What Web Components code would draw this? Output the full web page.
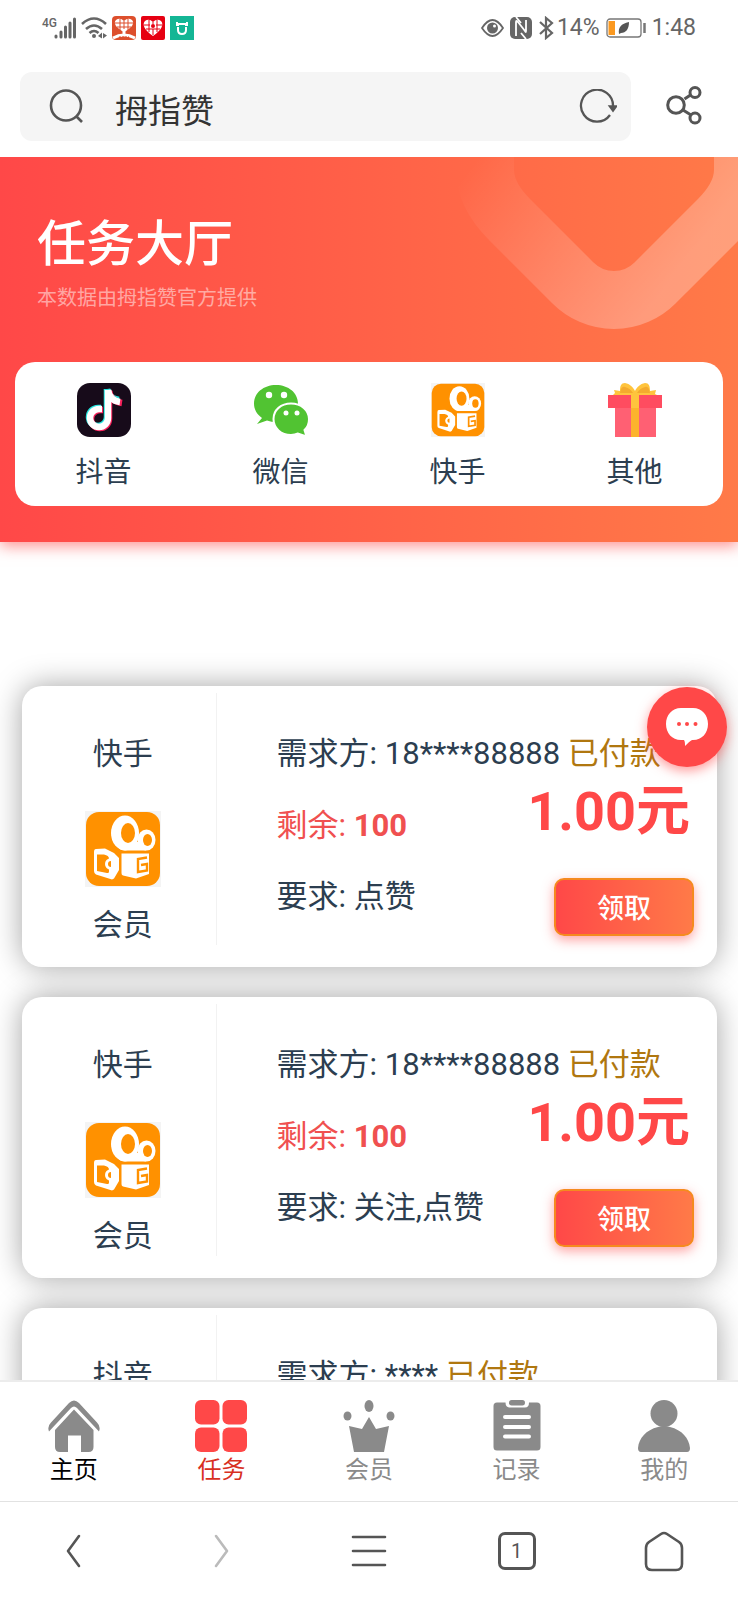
<!DOCTYPE html>
<html lang="zh-CN">
<head>
<meta charset="utf-8">
<meta name="viewport" content="width=device-width, initial-scale=1">
<title>拇指赞</title>
<style>
  body { margin: 0; background: #fff; color: #2c3e50; font-family: Roboto, "Noto Sans CJK SC", sans-serif; }
</style>
</head>
<body>
<app-shell>
  <status-bar slot="top"></status-bar>
  <address-bar slot="top"></address-bar>

  <task-hero>
    <span slot="title">任务大厅</span>
    <span slot="subtitle">本数据由拇指赞官方提供</span>
    <channel-link icon="douyin">抖音</channel-link>
    <channel-link icon="wechat">微信</channel-link>
    <channel-link icon="kuaishou">快手</channel-link>
    <channel-link icon="gift">其他</channel-link>
  </task-hero>
  <task-list>
    <task-card name="快手" icon="kuaishou" owner="18****88888" left="100" need="点赞" price="1.00元"></task-card>
    <task-card name="快手" icon="kuaishou" owner="18****88888" left="100" need="关注,点赞" price="1.00元"></task-card>
    <task-card name="抖音" owner="****"></task-card>
  </task-list>

  <chat-button slot="float"></chat-button>
  <tab-bar slot="bottom">
    <tab-item icon="home" tone="plain">主页</tab-item>
    <tab-item icon="tasks" tone="active">任务</tab-item>
    <tab-item icon="crown">会员</tab-item>
    <tab-item icon="records">记录</tab-item>
    <tab-item icon="person">我的</tab-item>
  </tab-bar>
  <browser-bar slot="bottom"></browser-bar>
</app-shell>

<script>
const ICONS = {
  douyin: `<svg viewBox="0 0 54 54" aria-hidden="true"><rect width="54" height="54" rx="13" fill="#170b1a"/>
    <g fill="none" stroke-width="6.500"><g stroke="#25e5df"><path d="M30 6v28a9 9 0 1 1-9-9h3"/><path d="M30 6c1 7 5 10 12 11"/></g>
    <g stroke="#f7205a"><path d="M32 8v28a9 9 0 1 1-9-9h3"/><path d="M32 8c1 7 6 11 13 12"/></g>
    <g stroke="#fff"><path d="M31 7v28a9 9 0 1 1-9-9h3"/><path d="M31 7c1 7 5 11 12 12"/></g></g></svg>`,
  wechat: `<svg viewBox="0 0 54 54" aria-hidden="true"><g fill="#51c332">
    <path d="M22 2C9.500 2 0 10 0 20.500c0 6 3 11 8 14.500L3 41l10-3.500c3 1 6 1.500 9 1.500 13 0 22-8 22-18.500S34.500 2 22 2z"/>
    <path stroke="#fff" stroke-width="2" d="M37 20.500c-10 0-17.500 6.500-17.500 15.500S27 52 37 52c2.500 0 5-.5 7-1.500l8.500 3-2-6.500c3-2.500 4.500-6.500 4.500-11 0-9-8-15.500-18-15.500z"/></g>
    <g fill="#fff"><circle cx="15" cy="12" r="3.200"/><circle cx="30" cy="12" r="3.200"/><circle cx="32" cy="30" r="2.500"/><circle cx="43" cy="30" r="2.500"/></g></svg>`,
  kuaishou: `<svg viewBox="0 0 76 76" aria-hidden="true"><rect width="76" height="76" fill="#f4f4f4"/><rect x="1" y="1" width="74" height="74" rx="13" fill="#ff9100"/>
    <g fill="#fff"><ellipse cx="40" cy="22" rx="14" ry="17.500"/><ellipse cx="61.500" cy="29" rx="9" ry="10.500"/><path d="M33 36l16-5h12v8.500H40q-5 0-7-3.500z"/>
    <path d="M11 38l9-.5 9 4.500 5 5v12l-5 8.500-2 1-16-5q-2-1-2-3.500V41q0-3 2-3z"/><path d="M36.500 42.500H64V63l-13 4.500-13-3q-1.500-.5-1.500-2.500z"/></g>
    <g fill="#ff9100"><ellipse cx="43" cy="22" rx="7" ry="10"/><ellipse cx="62.500" cy="29" rx="4.500" ry="6"/><path d="M12 43.500h7q5 1 5 4v13q0 2-2 1.500l-10-2z"/></g>
    <path d="M26 47q-6 1-6 6t6 6z" fill="#fff"/><path d="M26 50q-3 0-3 3t3 3z" fill="#ff9100"/>
    <path d="M62 46.500l-9 1.500v13l9-1.500V53l-6 1" fill="none" stroke="#ff9100" stroke-width="2.400"/></svg>`,
  gift: `<svg viewBox="0 0 54 54" aria-hidden="true"><path fill="#ff6073" d="M7 25h41v29H7z"/><path fill="#ff4c60" d="M0 12h54v13H0z"/>
    <path fill="#fcb42d" d="M23 9h8v45h-8z"/><path fill="#ffc43d" d="M23 9h8v16h-8zM6 7l6 1C12 3 13 0 17 0c5 1 8 4 10 8 2-4 5-7 10-8 4 0 5 3 5 8l6-1-1 4 2 1H5l2-2z"/>
    <path fill="#f4aa2e" d="M12 10c1-5 2-7 5-6 4 1 6 3 8 6zM42 10c-1-5-2-7-5-6-4 1-6 3-8 6z"/></svg>`,
  home: `<svg viewBox="0 0 52 52" aria-hidden="true"><path fill="#8a8a8a" d="M1 31.500q-2-5 2-9L21 3q5-5 10 0l18 19.500q4 4 2 9L29 8q-3-3-6 0z"/>
    <path fill="#8a8a8a" d="M26 9.500L45.500 30v17q0 5-5 5H33V35.500H20V52h-8q-5 0-5-5V30z"/></svg>`,
  tasks: `<svg viewBox="0 0 52 52" aria-hidden="true"><g fill="#ff4848"><rect width="24.500" height="24.500" rx="6"/><rect x="27.500" width="24.500" height="24.500" rx="6"/><rect y="27.500" width="24.500" height="24.500" rx="6"/><rect x="27.500" y="27.500" width="24.500" height="24.500" rx="6"/></g></svg>`,
  crown: `<svg viewBox="0 0 52 52" aria-hidden="true"><g fill="#8a8a8a"><ellipse cx="4.500" cy="16" rx="4" ry="4.500"/><ellipse cx="26" cy="6" rx="4.500" ry="6"/><ellipse cx="47.500" cy="16" rx="4" ry="4.500"/>
    <path d="M6 26l13 3 7-12 7 12 13-3-5 26H11z"/></g></svg>`,
  records: `<svg viewBox="0 0 52 52" aria-hidden="true"><path fill="#8a8a8a" d="M6 2.500h8.500q0 5 4.500 5h15q4 0 4-5h8q3.500 0 3.500 3.500v41q0 3.500-3.500 3.500H6q-3.500 0-3.500-3.500V6q0-3.500 3.500-3.500z"/>
    <rect x="18" width="16" height="5.500" rx="2.700" fill="#8a8a8a"/><path d="M14 17h24M14 27h24M14 36.500h24" stroke="#fff" stroke-width="4" stroke-linecap="round"/></svg>`,
  person: `<svg viewBox="0 0 52 52" aria-hidden="true"><g fill="#8a8a8a"><circle cx="26" cy="13.500" r="13.500"/><path d="M20 27q6-2 12 0c12 3 19 11 20 21q0 4-3 4H3q-3 0-3-4c1-10 8-18 20-21z"/></g></svg>`
};

/* Gives each component an open shadow root filled with its own styles and markup. */
class Part extends HTMLElement {
  connectedCallback() {
    if (this.shadowRoot) return;
    const t = document.createElement('template');
    t.innerHTML = `<style>*{box-sizing:border-box}svg{display:block}button,a,input{font:inherit;color:inherit}button{border:0;padding:0;background:none}a{text-decoration:none}${this.css()}</style>${this.html()}`;
    this.attachShadow({ mode: 'open' }).append(t.content.cloneNode(true));
  }
}

customElements.define('app-shell', class extends Part {
  css() { return `
    :host{display:flex;flex-direction:column;height:100vh}
    header,footer{flex:none;background:#fff}
    .view{flex:1;min-height:0;position:relative;display:flex}
    main{flex:1;min-width:0;overflow:hidden auto;scrollbar-width:none}`; }
  html() { return `<header><slot name="top"></slot></header><div class="view"><main><slot></slot></main><slot name="float"></slot></div><footer><slot name="bottom"></slot></footer>`; }
});

customElements.define('status-bar', class extends Part {
  css() { return `
    :host{display:flex;justify-content:space-between;align-items:center;height:56px;padding:0 42px;color:#666;font-size:23px;line-height:24px}
    div{display:flex;align-items:center;gap:5px}
    .net{display:flex;align-items:flex-start}
    .net span{width:12px;font-size:12px;line-height:12px;font-weight:500}
    .right{gap:6px}
    .tight{display:flex;gap:3px}`; }
  html() { return `
    <div>
      <span class="net"><span>4G</span><svg width="22" height="22" viewBox="0 0 22 22" fill="none" stroke="#666" stroke-width="3" stroke-linecap="round"><path d="M2 20v-1M7 20v-5M11.500 20V10M16 20V6M20.500 20V2"/></svg></span>
      <svg width="26" height="22" viewBox="0 0 26 22" fill="none" stroke="#666" stroke-width="2.600"><path d="M1 7q12-11 24 0M5 12q8-7 16 0M8.500 16q4.500-4 9 0"/><g fill="#666" stroke="none"><circle cx="13" cy="19" r="2"/><path d="M21 15.500v6l-4-2.500zM22 16l4 2.500-4 3z"/></g></svg>
      <svg width="24" height="24" viewBox="0 0 24 24"><rect width="24" height="24" rx="4" fill="#dd4f2c"/><path d="M12 16C4 12 1 7 4 4q4-3 8 1 4-4 8-1c3 3 0 8-8 12z" fill="#fff"/><path d="M3 7h18M5 11h14M8 3v12M16 3v12M12 5v9" stroke="#dd4f2c"/><path d="M12 13v6M1 22q11-6 22 0" stroke="#fff" stroke-width="3" fill="none"/><path d="M7 21.500h10" stroke="#dd4f2c" stroke-width="2" stroke-dasharray="2 1"/></svg>
      <svg width="24" height="24" viewBox="0 0 24 24"><rect width="24" height="24" rx="2" fill="#e60012"/><path d="M12 20C3 14 1 8 4 5q4-3 8 1 4-4 8-1c3 3 1 9-8 15z" fill="#fff"/><path d="M3 9h6M15 9h6M5 13h14M8 4v12M16 4v12M12 6v2M12 13v6" stroke="#e60012"/><circle cx="12" cy="10" r="2" fill="#e60012"/></svg>
      <svg width="24" height="24" viewBox="0 0 24 24"><rect width="24" height="24" fill="#14b695"/><path d="M8 11v3q0 4 4 4t4-4v-3M7 6v3h2M17 6v3h-2M7 7l4 1h2l4-1" fill="none" stroke="#fff" stroke-width="2"/></svg>
    </div>
    <div class="right">
      <svg width="23" height="18" viewBox="0 0 23 18" fill="none" stroke="#666" stroke-width="1.800"><path d="M1 9Q11.500-7 22 9 11.500 25 1 9z"/><circle cx="11.500" cy="9" r="5.500" fill="#666" stroke="none"/><circle cx="13.500" cy="7" r="1.500" fill="#fff" stroke="none"/></svg>
      <svg width="22" height="22" viewBox="0 0 22 22"><rect width="22" height="22" rx="5" fill="#666"/><path d="M6 19V5q0-2 2 0l7 9q1 2 1 0V3" fill="none" stroke="#fff" stroke-width="1.800"/><path d="M6 0l5 6M16 22l-5-6" stroke="#fff" stroke-width="1.800"/></svg>
      <span class="tight"><svg width="16" height="24" viewBox="0 0 16 24" fill="none" stroke="#666" stroke-width="2.200"><path d="M2 6l12 11-6 5V2l6 5L2 18"/></svg>
      <span>14%</span></span>
      <svg width="40" height="20" viewBox="0 0 40 20"><rect x="1" y="1" width="34" height="18" rx="3" fill="none" stroke="#777" stroke-width="1.300"/><path d="M2.500 3h6.500v14H2.500z" fill="#fb9920"/><path d="M13 16c-1-7 2-10 10-12 0 7-3 11-8 11z" fill="#555"/><path d="M38.500 5v10" stroke="#777" stroke-width="2.500"/></svg>
      <span>1:48</span>
    </div>`; }
});

customElements.define('address-bar', class extends Part {
  css() { return `
    :host{display:flex;align-items:center;gap:35px;padding:16px 36px 16px 20px}
    .box{flex:1;min-width:0;display:flex;align-items:center;height:69px;padding:0 14px 0 29px;border-radius:12px;background:#f5f5f5}
    input{flex:1;min-width:0;height:52px;margin-left:31px;padding:4px 0 0;border:0;outline:0;background:none;color:#333;font-size:33px;line-height:48px}`; }
  html() { return `
    <label class="box">
      <svg width="35" height="35" viewBox="0 0 35 35" fill="none" stroke="#555" stroke-width="2.600"><circle cx="17" cy="16.500" r="15"/><path d="M27 27l6 6"/></svg>
      <input type="text" value="拇指赞" aria-label="网址">
      <button aria-label="刷新"><svg width="38" height="36" viewBox="0 0 38 36" fill="none" stroke="#555" stroke-width="2.300"><path d="M31 26A16 16 0 1 1 34 17"/><path d="M31 17.500h6l-3 4z" fill="#555"/></svg></button>
    </label>
    <button aria-label="分享"><svg width="36" height="42" viewBox="0 0 36 42" fill="none" stroke="#555" stroke-width="3"><circle cx="10" cy="19" r="8.300"/><circle cx="29" cy="6.500" r="5"/><circle cx="29" cy="32" r="5"/><path d="M18.500 13l6-4M17 24l8 5"/></svg></button>`; }
});

customElements.define('task-hero', class extends Part {
  css() { return `
    :host{display:flow-root;position:relative;padding:0 15px 36px;background:linear-gradient(90deg,#ff4848,#ff7a48);box-shadow:0 4px 14px rgba(255,72,72,.6)}
    .deco{position:absolute;right:0;top:0}
    h1{position:relative;margin:52px 22px 0;color:#fff;font-size:49px;line-height:72px;font-weight:500}
    p{position:relative;margin:2px 22px 0;color:rgba(255,255,255,.5);font-size:20px;line-height:30px}
    nav{position:relative;display:grid;grid-template-columns:repeat(4,1fr);margin-top:49px;padding:21px 0 13px;border-radius:20px;background:#fff}`; }
  html() { return `
    <svg class="deco" width="288" height="180" viewBox="450 157 288 180" aria-hidden="true"><defs><linearGradient id="g" gradientUnits="userSpaceOnUse" x1="460" y1="180" x2="640" y2="320"><stop offset="0" stop-color="#fff" stop-opacity="0"/><stop offset="1" stop-color="#fff" stop-opacity=".28"/></linearGradient></defs>
    <path fill="none" stroke="url(#g)" stroke-width="58" d="M485 150v20Q485 195 510 220L573 283A58 58 0 0 0 655 283L718 220Q743 195 743 170V150"/></svg>
    <h1><slot name="title"></slot></h1><p><slot name="subtitle"></slot></p><nav><slot></slot></nav>`; }
});

customElements.define('channel-link', class extends Part {
  css() { return `
    :host{display:block}
    a{display:flex;flex-direction:column;align-items:center;gap:16px;font-size:28px;line-height:40px}
    svg{width:54px;height:54px}`; }
  html() { return `<a href="#">${ICONS[this.getAttribute('icon')]}<span><slot></slot></span></a>`; }
});

customElements.define('task-list', class extends Part {
  css() { return `:host{display:flex;flex-direction:column;gap:30px;padding:144px 21px 30px 22px}`; }
  html() { return `<slot></slot>`; }
});

customElements.define('task-card', class extends Part {
  css() { return `
    :host{display:grid;grid-template-columns:28% 1fr;padding:7px 0 22px;border-radius:20px;background:#fff;box-shadow:0 0 30px rgba(0,0,0,.36);font-size:30px;line-height:40px;white-space:nowrap}
    .who{display:flex;flex-direction:column;align-items:center;padding:41px 0 0 8px;border-right:1px solid #f2f2f2}
    .who svg{width:76px;height:76px;margin:37px 0 18px}
    .info{padding:41px 23px 0 60px;font-size:31px}
    .paid{color:#b0770f}
    .row{display:flex;justify-content:space-between}
    .facts{display:flex;flex-direction:column;gap:31px;padding-top:32px}
    .left{color:#f05050}
    .pay{display:flex;flex-direction:column;align-items:flex-end;gap:36px;padding-top:8px}
    .price{padding-right:4px;color:#ff4848;font-size:54px;line-height:60px;font-weight:700}
    button{width:140px;height:58px;padding-top:4px;border:2px solid #f58a1f;border-radius:10px;background:linear-gradient(90deg,#ff4848,#ff7a48);box-shadow:0 4px 12px rgba(255,72,72,.5);color:#fff;font-size:27px;line-height:40px;font-weight:500}`; }
  html() {
    const a = n => this.getAttribute(n);
    const full = a('price') !== null;
    return `
      <div class="who"><span>${a('name')}</span>${full ? `${ICONS[a('icon')]}<span>会员</span>` : ''}</div>
      <div class="info"><div>需求方: ${a('owner')} <span class="paid">已付款</span></div>
      ${full ? `<div class="row"><div class="facts"><span class="left">剩余: <b>${a('left')}</b></span><span>要求: ${a('need')}</span></div>
        <div class="pay"><span class="price">${a('price')}</span><button>领取</button></div></div>` : ''}</div>`;
  }
});

customElements.define('chat-button', class extends Part {
  css() { return `
    :host{display:block;position:absolute;top:530px;right:11px}
    button{display:grid;place-items:center;width:80px;height:80px;border-radius:50%;background:#ff4848;box-shadow:0 4px 12px rgba(255,72,72,.55)}`; }
  html() { return `<button aria-label="客服"><svg width="44" height="38" viewBox="0 0 44 38"><path fill="#fff" d="M16 0h12c9 0 15 7 15 16s-6 16-15 16h-1c-2 1-4 3-7 6 0-3 0-4-1-6h-3C7 32 1 25 1 16S7 0 16 0z"/><g fill="#ff4848"><circle cx="14" cy="16" r="2"/><circle cx="22" cy="16" r="2"/><circle cx="30.500" cy="16" r="2"/></g></svg></button>`; }
});

customElements.define('tab-bar', class extends Part {
  css() { return `:host{display:grid;grid-template-columns:repeat(5,1fr);padding:18px 0 14px;border-top:2px solid #ececec}`; }
  html() { return `<slot></slot>`; }
});

customElements.define('tab-item', class extends Part {
  css() { return `
    :host{display:block;color:#8a8a8a}
    :host([tone=plain]){color:#000}
    :host([tone=active]){color:#d8301f}
    a{display:flex;flex-direction:column;align-items:center;gap:1px;font-size:24px;line-height:34px}
    svg{width:52px;height:52px}`; }
  html() { return `<a href="#">${ICONS[this.getAttribute('icon')]}<span><slot></slot></span></a>`; }
});

customElements.define('browser-bar', class extends Part {
  css() { return `
    :host{display:grid;grid-template-columns:repeat(5,1fr);place-items:center;box-sizing:border-box;height:99px;border-top:1px solid #e2e2e2}
    svg{fill:none;stroke:#555;stroke-width:2.600;stroke-linecap:round;stroke-linejoin:round}
    .off svg{stroke:#bbb}
    .count{width:38px;height:38px;border:3px solid #555;border-radius:7px;color:#555;font-size:20px;line-height:32px;text-align:center}`; }
  html() { return `
    <button aria-label="后退"><svg width="36" height="36" viewBox="0 0 36 36"><path d="M23 3L12 18l11 15"/></svg></button>
    <button aria-label="前进" class="off" disabled><svg width="36" height="36" viewBox="0 0 36 36"><path d="M13 3l11 15-11 15"/></svg></button>
    <button aria-label="菜单"><svg width="36" height="36" viewBox="0 0 36 36"><path d="M2 4h32M2 18h32M2 32h32"/></svg></button>
    <button aria-label="标签页" class="count">1</button>
    <button aria-label="首页"><svg width="42" height="42" viewBox="-1 -1 42 42"><path d="M17 3q3-2 6 0l12 8q3 2 3 6v16q0 6-6 6H8q-6 0-6-6V17q0-4 3-6z"/></svg></button>`; }
});
</script>
</body>
</html>
